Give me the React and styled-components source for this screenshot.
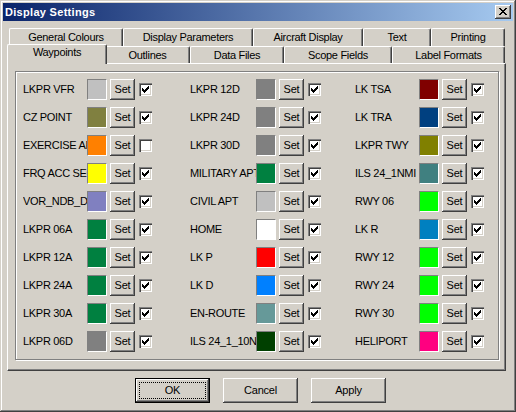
import React from 'react';
import styled, { createGlobalStyle, css } from 'styled-components';

const FACE = '#D4D0C8';

const Global = createGlobalStyle`
  html, body { margin: 0; padding: 0; background: ${FACE}; }
  body { font-family: "Liberation Sans", Arial, sans-serif; font-size: 11px; color: #000; }
  * { box-sizing: border-box; }
`;

const Window = styled.div`
  width: 516px;
  height: 412px;
  background: ${FACE};
  padding: 3px;
  box-shadow: inset -1px -1px #404040, inset 1px 1px ${FACE}, inset -2px -2px #808080, inset 2px 2px #fff;
  display: flex;
  flex-direction: column;
`;

const TitleBar = styled.div`
  height: 18px;
  flex: none;
  display: flex;
  align-items: center;
  justify-content: space-between;
  padding: 0 2px 0 2px;
  background: linear-gradient(to right, #0a246a, #a6caf0);
`;

const Title = styled.span`
  color: #fff;
  font-weight: bold;
  font-size: 11px;
  letter-spacing: 0.3px;
  line-height: 14px;
`;

const CaptionButton = styled.div`
  width: 16px;
  height: 14px;
  background: ${FACE};
  box-shadow: inset -1px -1px #404040, inset 1px 1px #fff, inset -2px -2px #808080, inset 2px 2px ${FACE};
  display: flex;
  align-items: center;
  justify-content: center;
  padding: 0 1px 1px 0;
`;

const Client = styled.div`
  flex: 1;
  display: flex;
  flex-direction: column;
  padding: 7px 7px 0 4px;
`;

const TabRow = styled.div`
  display: flex;
  align-items: flex-end;
  height: ${(p) => p.$h}px;
  padding-left: 2px;
`;

const Tab = styled.div`
  width: ${(p) => p.$w}px;
  height: ${(p) => p.$h}px;
  flex: none;
  background: ${FACE};
  border-top: 1px solid #fff;
  border-left: 1px solid #fff;
  border-right: 1px solid #404040;
  border-radius: 2px 2px 0 0;
  box-shadow: inset -1px 0 #808080;
  text-align: center;
  line-height: 13px;
  padding-top: 2px;
  letter-spacing: -0.3px;
  white-space: nowrap;
  ${(p) =>
    p.$active &&
    css`
      position: relative;
      z-index: 1;
      margin: 0 -2px -1px -2px;
      padding-top: 1px;
    `}
`;

const Panel = styled.div`
  height: 308px;
  border: 1px solid;
  border-color: #fff #404040 #404040 #fff;
  box-shadow: inset -1px -1px #808080;
  padding: 7px 6px 10px 7px;
`;

const Group = styled.div`
  height: 289px;
  border: 1px solid #808080;
  box-shadow: inset 1px 1px #fff, 1px 1px #fff;
  padding: 7px 7px;
  display: grid;
  grid-template-columns: 167px 165px 1fr;
  grid-template-rows: repeat(10, 21px);
  row-gap: 7px;
  grid-auto-flow: column;
`;

const Item = styled.div`
  display: flex;
  align-items: center;
  height: 21px;
`;

const Label = styled.span`
  width: ${(p) => p.$w}px;
  flex: none;
  overflow: hidden;
  white-space: nowrap;
  letter-spacing: -0.3px;
  line-height: 13px;
`;

const Swatch = styled.div`
  width: 20px;
  height: 21px;
  flex: none;
  border: 1px solid;
  border-color: #808080 #fff #fff #808080;
  background: ${(p) => p.$c};
`;

const SetButton = styled.div`
  width: 25px;
  height: 21px;
  flex: none;
  margin-left: 3px;
  background: ${FACE};
  box-shadow: inset -1px -1px #404040, inset 1px 1px #fff, inset -2px -2px #808080;
  display: flex;
  align-items: center;
  justify-content: center;
  padding-bottom: 1px;
  letter-spacing: -0.2px;
`;

const CheckBox = styled.div`
  width: 13px;
  height: 13px;
  flex: none;
  margin-left: 4px;
  background: #fff;
  box-shadow: inset 1px 1px #808080, inset 2px 2px #404040, inset -1px -1px #fff, inset -2px -2px ${FACE};
  padding: 3px;
  display: flex;
`;

const ButtonRow = styled.div`
  display: flex;
  gap: 13px;
  margin-top: 7px;
  padding-left: 128px;
`;

const PushButton = styled.div`
  width: 75px;
  height: 25px;
  background: ${FACE};
  display: flex;
  align-items: center;
  justify-content: center;
  box-shadow: inset -1px -1px #404040, inset 1px 1px #fff, inset -2px -2px #808080;
  padding-bottom: 1px;
  letter-spacing: -0.2px;
  ${(p) =>
    p.$default &&
    css`
      border: 1px solid #000;
      outline: 1px dotted #000;
      outline-offset: -5px;
    `}
`;

const CheckMark = () => (
  <svg width="7" height="7" viewBox="0 0 7 7" shapeRendering="crispEdges">
    <path d="M0 2H1V3H2V4H3V3H4V2H5V1H6V0H7V3H6V4H5V5H4V6H3V7H2V6H1V5H0Z" fill="#000" />
  </svg>
);

const X_ROWS = ['XX....XX', '.XX..XX.', '..XXXX..', '...XX...', '..XXXX..', '.XX..XX.', 'XX....XX'];

const CloseGlyph = () => (
  <svg width="8" height="7" viewBox="0 0 8 7" shapeRendering="crispEdges">
    {X_ROWS.flatMap((row, y) =>
      row.split('').map((c, x) => (c === 'X' ? <rect key={`${x}-${y}`} x={x} y={y} width="1" height="1" fill="#000" /> : null))
    )}
  </svg>
);

const row1 = [
  ['General Colours', 114],
  ['Display Parameters', 130],
  ['Aircraft Display', 110],
  ['Text', 68],
  ['Printing', 74],
];

const row2 = [
  ['Waypoints', 96, true],
  ['Outlines', 85],
  ['Data Files', 94],
  ['Scope Fields', 108],
  ['Label Formats', 113],
];

const columns = [
  {
    w: 64,
    items: [
      ['LKPR VFR', '#c0c0c0'],
      ['CZ POINT', '#808040'],
      ['EXERCISE AREA', '#ff8000', false],
      ['FRQ ACC SECTOR', '#ffff00'],
      ['VOR_NDB_DME', '#8080c0'],
      ['LKPR 06A', '#008040'],
      ['LKPR 12A', '#008040'],
      ['LKPR 24A', '#008040'],
      ['LKPR 30A', '#008040'],
      ['LKPR 06D', '#808080'],
    ],
  },
  {
    w: 66,
    items: [
      ['LKPR 12D', '#808080'],
      ['LKPR 24D', '#808080'],
      ['LKPR 30D', '#808080'],
      ['MILITARY APT', '#008040'],
      ['CIVIL APT', '#c0c0c0'],
      ['HOME', '#ffffff'],
      ['LK P', '#ff0000'],
      ['LK D', '#0080ff'],
      ['EN-ROUTE', '#669999'],
      ['ILS 24_1_10NMI', '#004000'],
    ],
  },
  {
    w: 64,
    items: [
      ['LK TSA', '#800000'],
      ['LK TRA', '#004080'],
      ['LKPR TWY', '#808000'],
      ['ILS 24_1NMI', '#408080'],
      ['RWY 06', '#00ff00'],
      ['LK R', '#0080c0'],
      ['RWY 12', '#00ff00'],
      ['RWY 24', '#00ff00'],
      ['RWY 30', '#00ff00'],
      ['HELIPORT', '#ff0080'],
    ],
  },
];

export default function App() {
  return (
    <>
      <Global />
      <Window>
        <TitleBar>
          <Title>Display Settings</Title>
          <CaptionButton>
            <CloseGlyph />
          </CaptionButton>
        </TitleBar>
        <Client>
          <TabRow $h={18}>
            {row1.map(([t, w]) => (
              <Tab key={t} $w={w} $h={18}>
                {t}
              </Tab>
            ))}
          </TabRow>
          <TabRow $h={17}>
            {row2.map(([t, w, a]) => (
              <Tab key={t} $w={a ? w + 4 : w} $h={a ? 20 : 17} $active={a}>
                {t}
              </Tab>
            ))}
          </TabRow>
          <Panel>
            <Group>
              {columns.map((col) =>
                col.items.map(([name, color, checked = true]) => (
                  <Item key={name}>
                    <Label $w={col.w}>{name}</Label>
                    <Swatch $c={color} />
                    <SetButton>Set</SetButton>
                    <CheckBox>{checked && <CheckMark />}</CheckBox>
                  </Item>
                ))
              )}
            </Group>
          </Panel>
          <ButtonRow>
            <PushButton $default>OK</PushButton>
            <PushButton>Cancel</PushButton>
            <PushButton>Apply</PushButton>
          </ButtonRow>
        </Client>
      </Window>
    </>
  );
}
